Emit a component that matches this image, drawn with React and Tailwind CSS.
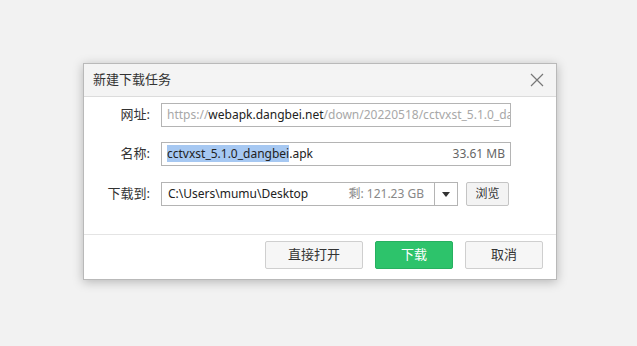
import React from "react";

const Label = ({ children }) => (
    <div className="w-[67px] pr-[11px] text-right text-[13px] text-[#333] shrink-0">{children}</div>
);

const App = () => {
    return (
        <div className="w-[637px] h-[346px] bg-[#f2f2f2] pt-[63px] pl-[83px] font-['Noto_Sans','Noto_Sans_CJK_SC',sans-serif]">
            <div className="w-[474px] h-[217px] bg-white border border-[#b9b9b9] shadow-[0_2px_10px_rgba(0,0,0,0.25)] flex flex-col">
                {/* Title bar */}
                <div className="h-[33px] bg-[#f4f4f4] border-b border-[#dcdcdc] flex items-center justify-between pl-[9px] pr-[12px]">
                    <span className="text-[13px] text-[#333]">新建下载任务</span>
                    <svg className="w-[14px] h-[14px]" viewBox="0 0 14 14" fill="none">
                        <path d="M1 1L13 13M13 1L1 13" stroke="#777" strokeWidth="1.2" />
                    </svg>
                </div>

                {/* Form */}
                <div className="flex-1 flex flex-col pt-[6px] pl-[10px]">
                    <div className="flex items-center h-[24px]">
                        <Label>网址:</Label>
                        <div className="w-[350px] h-[24px] border border-[#b4b4b4] flex items-center pl-[5px] overflow-hidden whitespace-nowrap text-[12px]">
                            <span className="text-[#a8a8a8]">https://</span>
                            <span className="text-[#222]">webapk.dangbei.net</span>
                            <span className="text-[#a8a8a8]">/down/20220518/cctvxst_5.1.0_dangbei.apk</span>
                        </div>
                    </div>

                    <div className="flex items-center h-[24px] mt-[15px]">
                        <Label>名称:</Label>
                        <div className="w-[350px] h-[24px] border border-[#b4b4b4] flex items-center justify-between pl-[5px] pr-[5px] whitespace-nowrap text-[12px]">
                            <span className="text-[#222]">
                                <span className="bg-[#a6c8f2]">cctvxst_5.1.0_dangbei</span>.apk
                            </span>
                            <span className="text-[#666]">33.61 MB</span>
                        </div>
                    </div>

                    <div className="flex items-center h-[24px] mt-[16px]">
                        <Label>下载到:</Label>
                        <div className="w-[297px] h-[24px] border border-[#b4b4b4] flex items-center whitespace-nowrap text-[12px]">
                            <div className="flex-1 flex items-center justify-between pl-[6px] pr-[10px]">
                                <span className="text-[#222]">C:\Users\mumu\Desktop</span>
                                <span className="text-[#888]">剩: 121.23 GB</span>
                            </div>
                            <div className="w-[23px] h-full border-l border-[#b4b4b4] flex items-center justify-center">
                                <svg className="w-[8px] h-[5px]" viewBox="0 0 8 5">
                                    <path d="M0 0H8L4 5Z" fill="#333" />
                                </svg>
                            </div>
                        </div>
                        <button className="ml-[8px] w-[43px] h-[24px] bg-[#f3f3f3] border border-[#c4c4c4] rounded-[2px] text-[12px] text-[#333] flex items-center justify-center">
                            浏览
                        </button>
                    </div>
                </div>

                {/* Footer */}
                <div className="h-[45px] border-t border-[#e4e4e4] flex items-start justify-end gap-[12px] pt-[6px] pr-[13px]">
                    <button className="w-[98px] h-[28px] bg-[#f6f6f6] border border-[#cfcfcf] rounded-[2px] text-[13px] text-[#333]">
                        直接打开
                    </button>
                    <button className="w-[78px] h-[28px] bg-[#2dc36b] border border-[#27b060] rounded-[2px] text-[13px] text-white">
                        下载
                    </button>
                    <button className="w-[78px] h-[28px] bg-[#f6f6f6] border border-[#cfcfcf] rounded-[2px] text-[13px] text-[#333]">
                        取消
                    </button>
                </div>
            </div>
        </div>
    );
};

export default App;
